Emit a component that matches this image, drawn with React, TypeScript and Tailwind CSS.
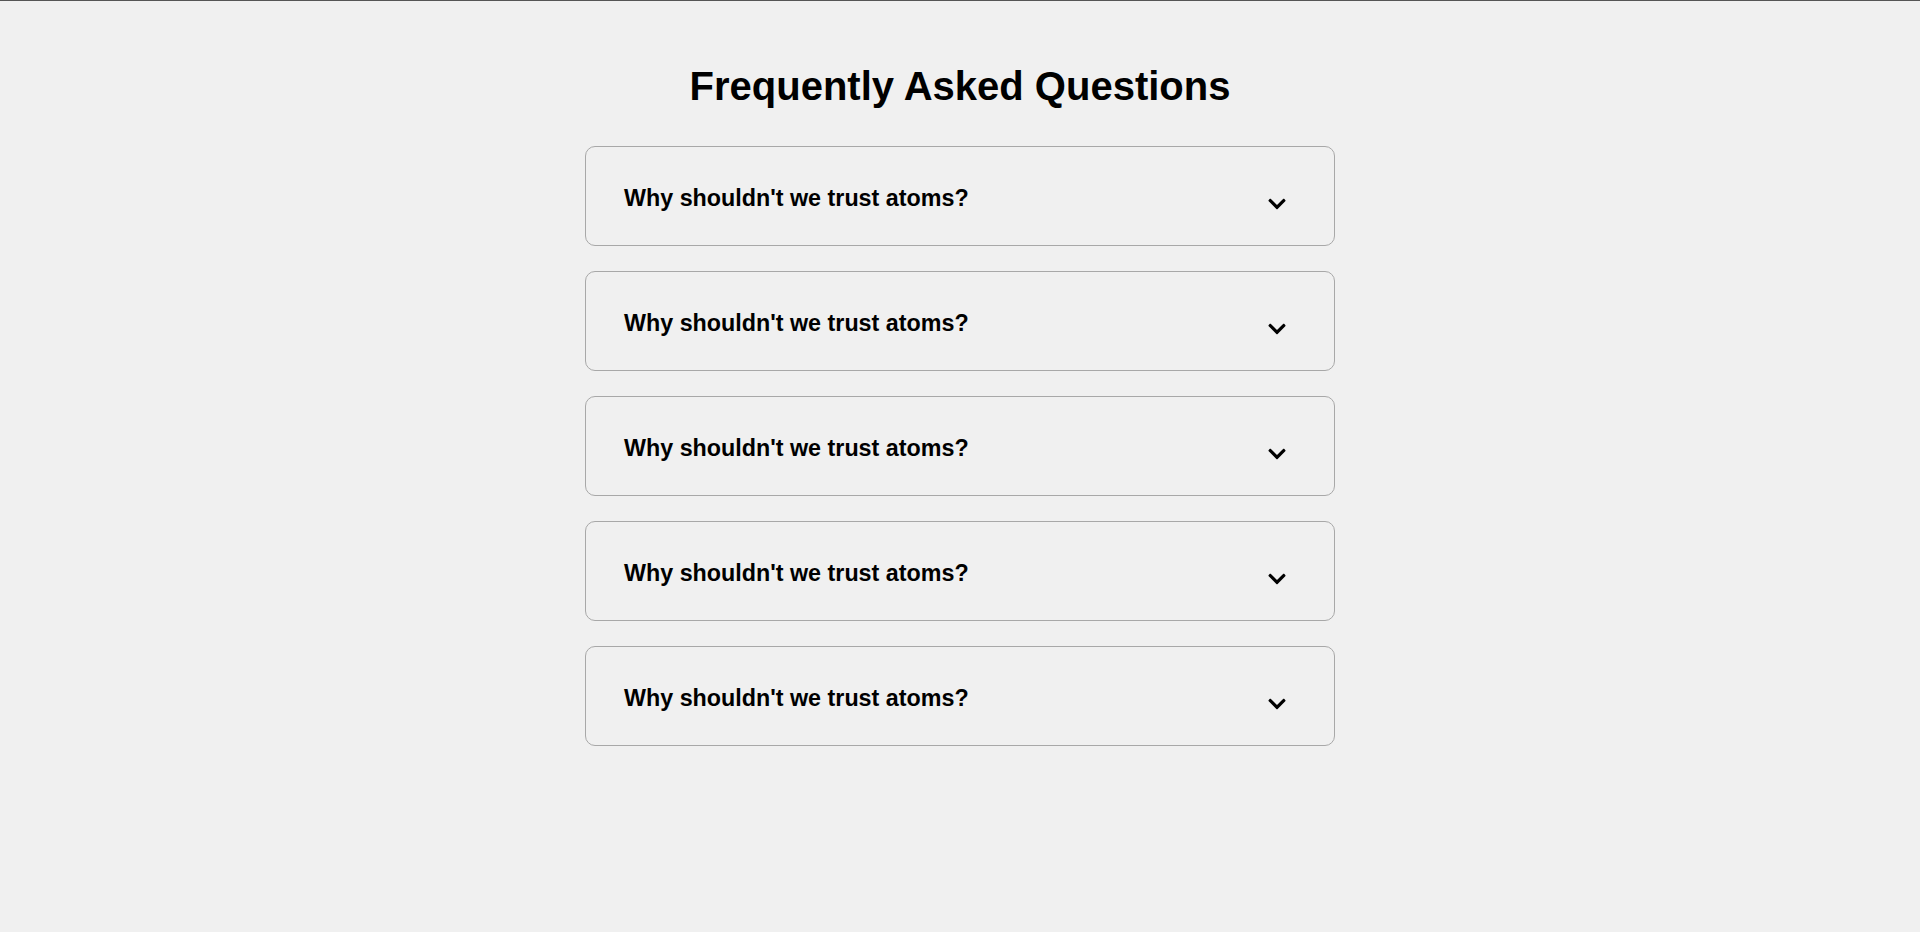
import { FaChevronDown } from "react-icons/fa";

const questions = [
  "Why shouldn't we trust atoms?",
  "Why shouldn't we trust atoms?",
  "Why shouldn't we trust atoms?",
  "Why shouldn't we trust atoms?",
  "Why shouldn't we trust atoms?",
];

function FaqItem({ question }: { question: string }) {
  return (
    <div className="flex h-[100px] items-center justify-between rounded-[10px] border border-[#a8a8a8] pl-[38px] pr-[47px]">
      <span className="mt-[4px] text-[23.3px] font-bold text-black">{question}</span>
      <FaChevronDown size={20} className="mt-[15px] text-black" />
    </div>
  );
}

export default function App() {
  return (
    <div
      className="min-h-[932px] border-t border-[#555555] bg-[#f0f0f0]"
      style={{ fontFamily: '"Liberation Sans", Arial, sans-serif' }}
    >
      <div className="mx-auto w-[750px] pt-[55px]">
        <h1 className="text-center text-[40px] font-bold text-black">
          Frequently Asked Questions
        </h1>
        <div className="mt-[30px] flex flex-col gap-[25px]">
          {questions.map((q, i) => (
            <FaqItem key={i} question={q} />
          ))}
        </div>
      </div>
    </div>
  );
}
